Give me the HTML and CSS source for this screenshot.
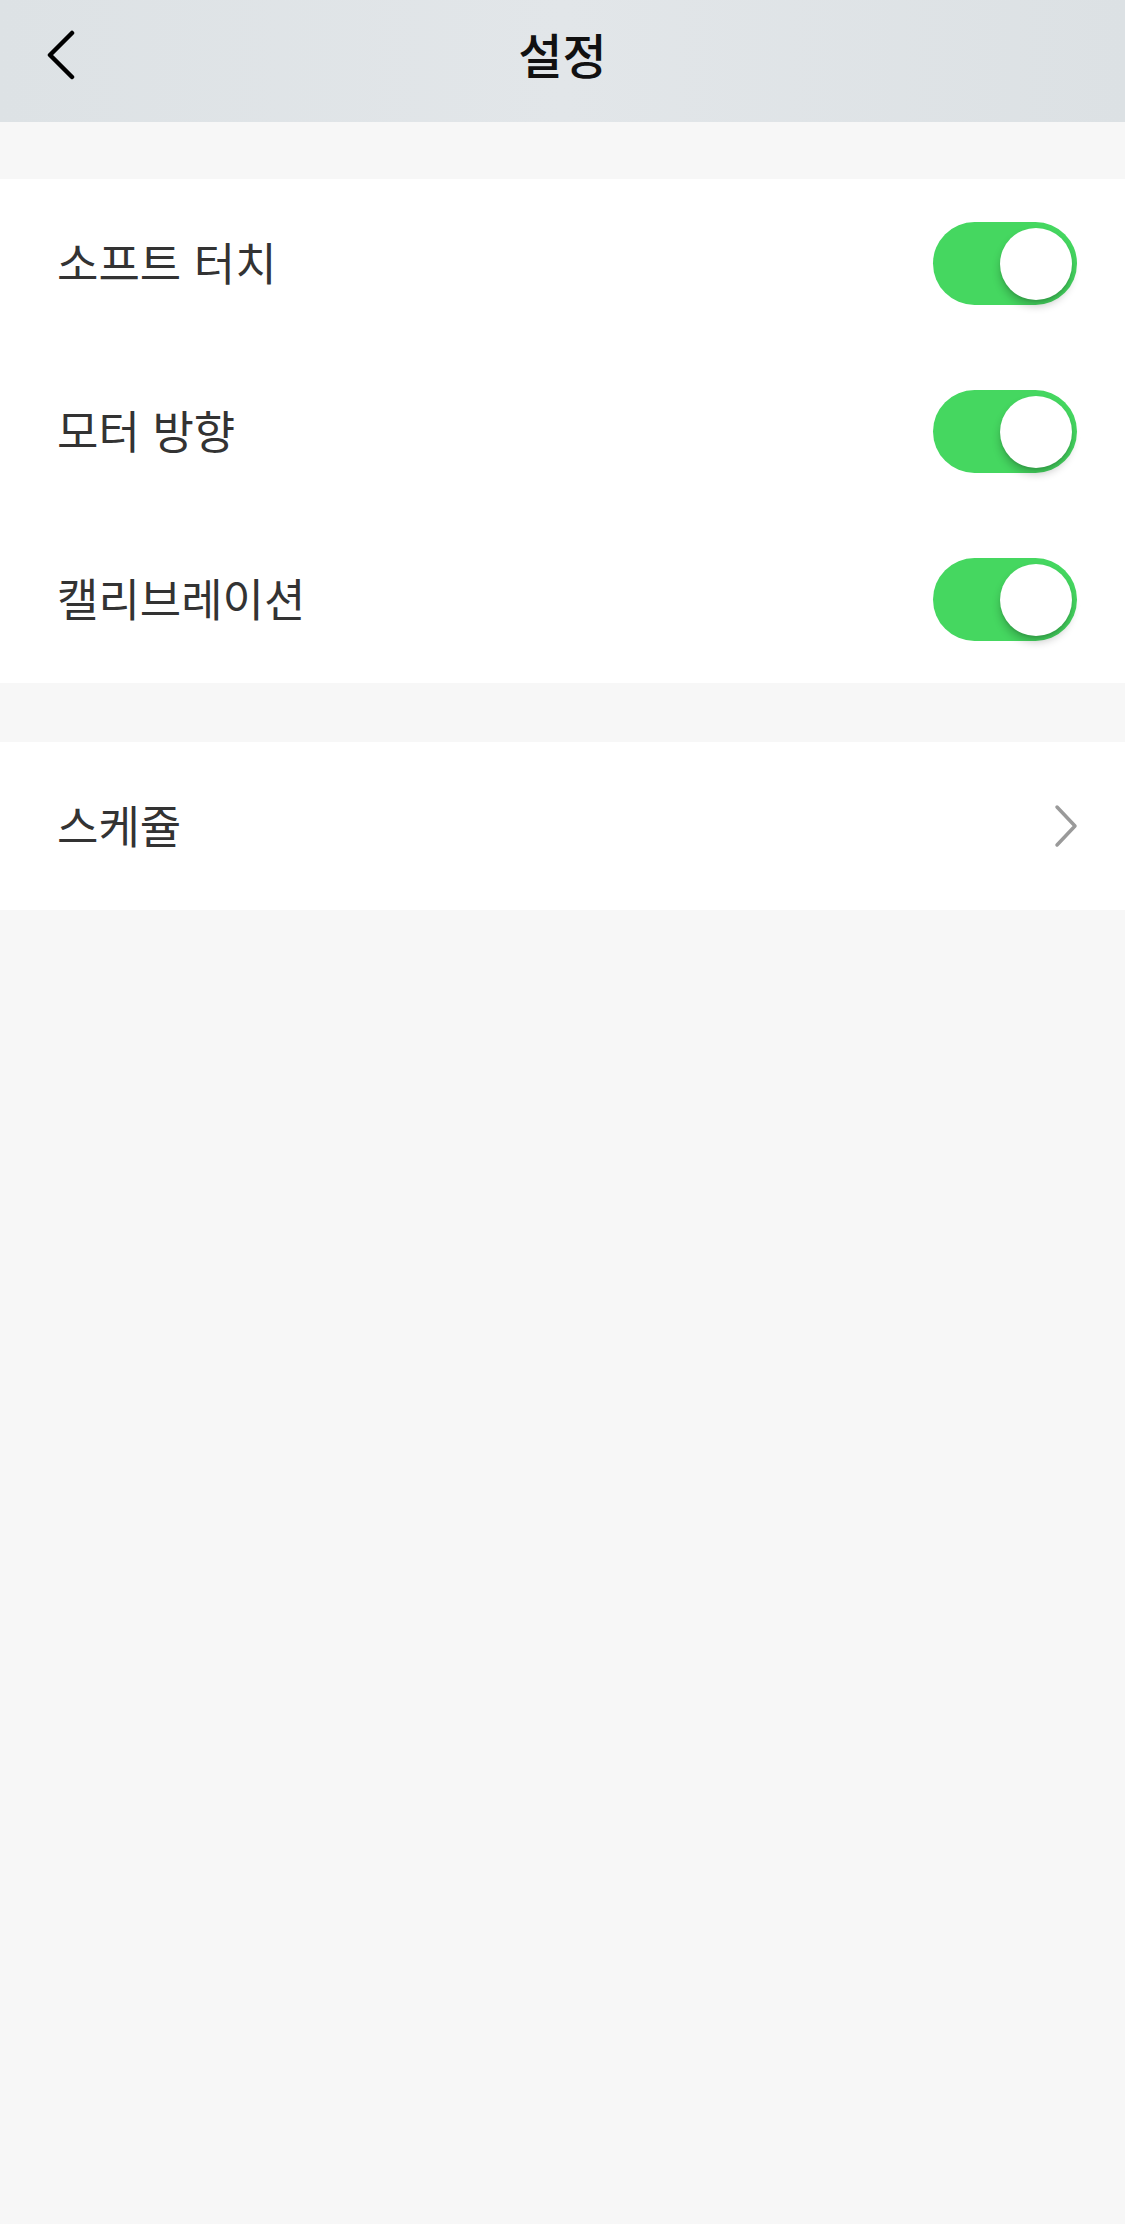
FILE: index.html
```html
<!DOCTYPE html>
<html lang="ko">
<head>
    <meta charset="UTF-8">
    <meta name="viewport" content="width=device-width, initial-scale=1.0">
    <title>설정</title>
    <link rel="stylesheet" href="styles.css">
</head>
<body>
    <header class="nav">
        <button class="back" aria-label="뒤로">
            <svg width="30" height="52" viewBox="0 0 30 52">
                <polyline points="26,3 4,25 26,47" fill="none" stroke="#000" stroke-width="4.5" stroke-linecap="round" stroke-linejoin="round"/>
            </svg>
        </button>
        <h1>설정</h1>
    </header>

    <section class="group">
        <div class="row">
            <span class="label">소프트 터치</span>
            <span class="switch on"><span class="knob"></span></span>
        </div>
        <div class="row">
            <span class="label">모터 방향</span>
            <span class="switch on"><span class="knob"></span></span>
        </div>
        <div class="row">
            <span class="label">캘리브레이션</span>
            <span class="switch on"><span class="knob"></span></span>
        </div>
    </section>

    <section class="group">
        <div class="row">
            <span class="label">스케쥴</span>
            <svg class="arrow" width="28" height="44" viewBox="0 0 28 44">
                <polyline points="5,3 23,22 5,41" fill="none" stroke="#9a9a9a" stroke-width="3.5" stroke-linecap="round" stroke-linejoin="round"/>
            </svg>
        </div>
    </section>
</body>
</html>
```

FILE: styles.css
```css
body {
    margin: 0;
    background-color: #f7f7f7;
    font-family: "Noto Sans CJK KR", "Noto Sans", sans-serif;
    min-height: 2224px;
}
.nav {
    height: 122px;
    background: linear-gradient(to right, #dde2e5, #e2e6e9 50%, #dce1e4);
    display: flex;
    align-items: center;
    justify-content: center;
    position: relative;
}
.nav h1 {
    margin: 0;
    font-size: 48px;
    font-weight: 500;
    color: #111;
    padding-bottom: 16px;
}
.back {
    position: absolute;
    left: 46px;
    top: 30px;
    background: none;
    border: none;
    padding: 0;
    cursor: pointer;
}
.group {
    background-color: #fff;
    margin-top: 57px;
}
.group + .group {
    margin-top: 59px;
}
.row {
    height: 168px;
    display: flex;
    align-items: center;
    justify-content: space-between;
    padding: 0 46px 0 57px;
}
.label {
    font-size: 45px;
    color: #333;
    padding-bottom: 4px;
}
.switch {
    width: 144px;
    height: 83px;
    border-radius: 42px;
    background-color: #d9d9d9;
    position: relative;
    margin-right: 2px;
}
.switch.on {
    background-color: #45d760;
}
.knob {
    position: absolute;
    top: 6px;
    right: 5px;
    width: 72px;
    height: 72px;
    border-radius: 50%;
    background-color: #fff;
    box-shadow: 0 6px 8px rgba(0, 0, 0, 0.22), 0 2px 2px rgba(0, 0, 0, 0.08);
}
.arrow {
    margin-right: -1px;
}
```
